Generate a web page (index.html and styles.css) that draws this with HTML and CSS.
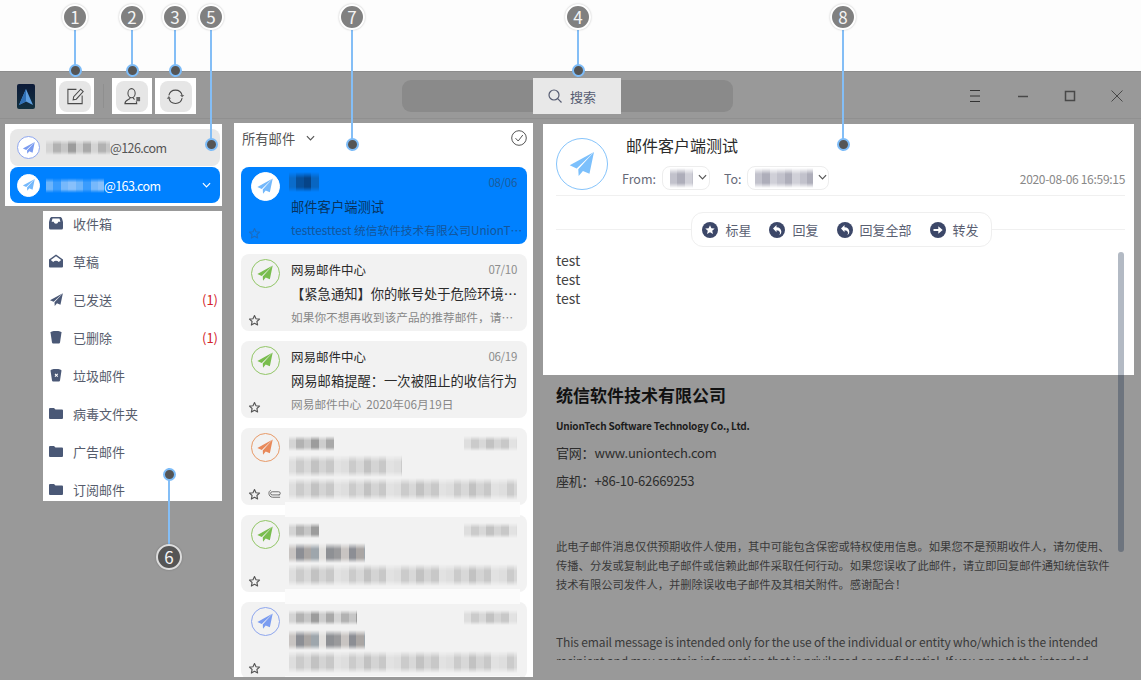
FILE: index.html
```html
<!DOCTYPE html>
<html lang="zh-CN">
<head>
    <meta charset="UTF-8">
    <meta name="viewport" content="width=device-width, initial-scale=1.0">
    <title>邮箱</title>
    <link rel="stylesheet" href="styles.css">
</head>
<body>
    <svg class="defs" xmlns="http://www.w3.org/2000/svg">
        <symbol id="plane" viewBox="0 0 24 24"><path d="M21 3 2.8 13 8 15.3Z"/><path d="M21 3 9.2 16 9.5 21 12.7 17.2 17.6 19.3Z"/></symbol>
        <symbol id="chevron" viewBox="0 0 10 6"><path d="M1 1l4 4 4-4" fill="none" stroke="currentColor" stroke-width="1.3"/></symbol>
        <symbol id="star" viewBox="0 0 14 14"><path d="M7 1.6l1.6 3.5 3.8.4-2.8 2.6.8 3.8L7 10l-3.400 1.900.8-3.800L1.600 5.500l3.800-.4z" fill="none" stroke="currentColor" stroke-width="1.200" stroke-linejoin="round"/></symbol>
        <symbol id="folder" viewBox="0 0 14 14"><path d="M0 3a1 1 0 0 1 1-1h4l1.500 1.600H13a1 1 0 0 1 1 1V12a1 1 0 0 1-1 1H1a1 1 0 0 1-1-1z"/></symbol>
        <symbol id="cup" viewBox="0 0 14 14"><path d="M1.500 2.500C1.500 1.600 3.500 1 7 1s5.500.6 5.500 1.500L11 12.500c-.1.600-.5 1-1.100 1H4.100c-.6 0-1-.4-1.100-1z"/></symbol>
    </svg>

    <div class="top-gap"></div>

    <div class="window">
        <header class="toolbar">
            <div class="logo"><svg viewBox="0 0 18 25"><path d="M9 5 2 21 9 17.500 16 21Z" fill="#5f9fe0"/><path d="M9 5v12.500L2 21Z" fill="#2f6fb5"/></svg></div>
            <div class="tool-box tool-first">
                <button class="tool-btn"><svg viewBox="0 0 20 20" class="tool-icon"><path d="M11 2.500H2v15h15V9"/><path d="M7.500 13.500l.6-3.300L15.500 2.300l2.600 2.500L10.800 12.800z"/></svg></button>
            </div>
            <span class="tool-divider"></span>
            <div class="tool-box">
                <button class="tool-btn"><svg viewBox="0 0 20 20" class="tool-icon"><ellipse cx="9" cy="6.500" rx="3.800" ry="4.800"/><path d="M7.200 11v1.200C5.500 13.500 2 14 2 17.500h12.500c0-1-.3-1.700-.8-2.300"/><path d="M11 11v1.200l1.500.8"/><path class="tool-solid" d="M14 10.500h4v4.500h-4z"/></svg></button>
            </div>
            <div class="tool-box tool-last">
                <button class="tool-btn"><svg viewBox="0 0 20 20" class="tool-icon"><path d="M3 8.800a7.200 7.200 0 0 1 14 0"/><path d="M17 11.800a7.200 7.200 0 0 1-14 0"/><path class="tool-solid" d="M14.800 8.300h4.400L17 11z"/><path class="tool-solid" d="M.8 12.300h4.400L3 9.600z"/></svg></button>
            </div>
            <div class="search">
                <div class="search-box">
                    <svg viewBox="0 0 16 16" class="search-icon"><circle cx="7" cy="7" r="5"/><path d="M10.700 10.700 14.500 14.500"/></svg>
                    <span>搜索</span>
                </div>
            </div>
            <div class="win-controls">
                <span class="win-btn"><svg viewBox="0 0 12 12" class="win-dark"><path d="M1 .5h10M1 6h10M1 11.500h10"/></svg></span>
                <span class="win-btn"><svg viewBox="0 0 12 12"><path d="M1 6.500h10" class="win-thick"/></svg></span>
                <span class="win-btn"><svg viewBox="0 0 12 12"><path d="M1.500 1.500h9v9h-9z" class="win-thick"/></svg></span>
                <span class="win-btn"><svg viewBox="0 0 12 12"><path d="M.5.500l11 11M11.500.500l-11 11"/></svg></span>
            </div>
        </header>

        <main class="main">
            <aside class="left">
                <div class="accounts">
                    <div class="account">
                        <span class="avatar avatar-small avatar-periwinkle"><svg class="plane"><use href="#plane"/></svg></span>
                        <span class="smudge smudge-grey account-smudge-a"></span><span class="account-domain">@126.com</span>
                    </div>
                    <div class="account account-active">
                        <span class="avatar avatar-small avatar-sky"><svg class="plane"><use href="#plane"/></svg></span>
                        <span class="smudge smudge-sky account-smudge-b"></span><span class="account-domain">@163.com</span>
                        <svg class="account-chevron"><use href="#chevron"/></svg>
                    </div>
                </div>
                <nav class="menu">
                    <ul class="menu-list">
                        <li class="menu-item">
                            <svg class="menu-icon" viewBox="0 0 14 14"><path fill-rule="evenodd" d="M3 1h8c1 0 1.500.5 2 1.500L14 6v6a1.500 1.500 0 0 1-1.500 1.500h-11A1.500 1.500 0 0 1 0 12V6l1-3.500C1.500 1.500 2 1 3 1zm-.4 4.800L3.500 2.500h7l.9 3.300H9.300c-.3 1.200-1.200 2-2.300 2s-2-.8-2.300-2z"/></svg>
                            <span>收件箱</span>
                        </li>
                        <li class="menu-item">
                            <svg class="menu-icon" viewBox="0 0 14 14"><path fill-rule="evenodd" d="M7 .5 14 5.500V12.500a1 1 0 0 1-1 1H1a1 1 0 0 1-1-1V5.500zM7 2.300 1.800 6l2.400 1.900c.8-.7 1.800-1.100 2.800-1.100s2 .4 2.800 1.100L12.200 6z"/></svg>
                            <span>草稿</span>
                        </li>
                        <li class="menu-item">
                            <svg class="menu-icon menu-icon-plane"><use href="#plane"/></svg>
                            <span>已发送</span><span class="menu-count">(1)</span>
                        </li>
                        <li class="menu-item">
                            <svg class="menu-icon"><use href="#cup"/></svg>
                            <span>已删除</span><span class="menu-count">(1)</span>
                        </li>
                        <li class="menu-item">
                            <svg class="menu-icon" viewBox="0 0 14 14"><path fill-rule="evenodd" d="M1.500 2.500C1.500 1.600 3.500 1 7 1s5.500.6 5.500 1.500L11 12.500c-.1.600-.5 1-1.100 1H4.100c-.6 0-1-.4-1.100-1zM5.600 6.300l1 1-1 1 .8.800 1-1 1 1 .7-.8-1-1 1-1-.7-.7-1 1-1-1z"/></svg>
                            <span>垃圾邮件</span>
                        </li>
                        <li class="menu-item">
                            <svg class="menu-icon"><use href="#folder"/></svg>
                            <span>病毒文件夹</span>
                        </li>
                        <li class="menu-item">
                            <svg class="menu-icon"><use href="#folder"/></svg>
                            <span>广告邮件</span>
                        </li>
                        <li class="menu-item">
                            <svg class="menu-icon"><use href="#folder"/></svg>
                            <span>订阅邮件</span>
                        </li>
                    </ul>
                </nav>
            </aside>

            <section class="list">
                <div class="list-head">
                    <span>所有邮件</span>
                    <svg class="list-chevron"><use href="#chevron"/></svg>
                    <svg class="list-check" viewBox="0 0 16 16"><circle cx="8" cy="8" r="7.300"/><path d="M4.500 8.200 7.200 11 11.800 5"/></svg>
                </div>
                <div class="cards">
                    <article class="card card-active">
                        <div class="card-side">
                            <span class="avatar avatar-sky"><svg class="plane"><use href="#plane"/></svg></span>
                            <svg class="card-star"><use href="#star"/></svg>
                        </div>
                        <div class="card-body">
                            <div class="card-top"><span class="smudge smudge-navy smudge-name-s"></span><span class="card-date">08/06</span></div>
                            <div class="card-subject">邮件客户端测试</div>
                            <div class="card-preview">testtesttest 统信软件技术有限公司UnionT…</div>
                        </div>
                    </article>
                    <article class="card">
                        <div class="card-side">
                            <span class="avatar avatar-green"><svg class="plane"><use href="#plane"/></svg></span>
                            <svg class="card-star"><use href="#star"/></svg>
                        </div>
                        <div class="card-body">
                            <div class="card-top"><span class="card-name">网易邮件中心</span><span class="card-date">07/10</span></div>
                            <div class="card-subject">【紧急通知】你的帐号处于危险环境…</div>
                            <div class="card-preview">如果你不想再收到该产品的推荐邮件，请…</div>
                        </div>
                    </article>
                    <article class="card">
                        <div class="card-side">
                            <span class="avatar avatar-green"><svg class="plane"><use href="#plane"/></svg></span>
                            <svg class="card-star"><use href="#star"/></svg>
                        </div>
                        <div class="card-body">
                            <div class="card-top"><span class="card-name">网易邮件中心</span><span class="card-date">06/19</span></div>
                            <div class="card-subject">网易邮箱提醒：一次被阻止的收信行为</div>
                            <div class="card-preview">网易邮件中心&nbsp; 2020年06月19日</div>
                        </div>
                    </article>
                    <article class="card card-pale">
                        <div class="card-side">
                            <span class="avatar avatar-orange"><svg class="plane"><use href="#plane"/></svg></span>
                            <svg class="card-star"><use href="#star"/></svg>
                            <svg class="card-clip" viewBox="0 0 14 10"><path d="M12.500 6H4.500a1.700 1.700 0 0 1 0-3.400h7a1.700 1.700 0 0 1 0 3.400"/><path d="M3 1C1.500 1.500 1 2.800 1 4.200 1 6.500 2.500 8.500 5 8.500h8"/></svg>
                        </div>
                        <div class="card-body">
                            <div class="card-top"><span class="smudge smudge-grey smudge-name-m"></span><span class="smudge smudge-pale smudge-date"></span></div>
                            <div class="smudge smudge-pale smudge-subject-l"></div>
                            <div class="smudge smudge-pale smudge-preview"></div>
                        </div>
                    </article>
                    <article class="card card-pale">
                        <div class="card-side">
                            <span class="avatar avatar-green"><svg class="plane"><use href="#plane"/></svg></span>
                            <svg class="card-star"><use href="#star"/></svg>
                        </div>
                        <div class="card-body">
                            <div class="card-top"><span class="smudge smudge-grey smudge-name-s"></span><span class="smudge smudge-pale smudge-date"></span></div>
                            <div class="smudge smudge-dark smudge-subject-m"></div>
                            <div class="smudge smudge-pale smudge-preview"></div>
                        </div>
                    </article>
                    <article class="card card-pale">
                        <div class="card-side">
                            <span class="avatar avatar-periwinkle"><svg class="plane"><use href="#plane"/></svg></span>
                            <svg class="card-star"><use href="#star"/></svg>
                        </div>
                        <div class="card-body">
                            <div class="card-top"><span class="smudge smudge-grey smudge-name-l"></span><span class="smudge smudge-pale smudge-date"></span></div>
                            <div class="smudge smudge-dark smudge-subject-m"></div>
                            <div class="smudge smudge-pale smudge-preview"></div>
                        </div>
                    </article>
                </div>
            </section>

            <section class="reader">
                <div class="reader-top">
                    <div class="mail-head">
                        <span class="avatar avatar-large"><svg class="plane"><use href="#plane"/></svg></span>
                        <div class="mail-info">
                            <h2 class="mail-title">邮件客户端测试</h2>
                            <div class="mail-meta">
                                <span class="meta-label">From:</span>
                                <span class="addr addr-from"><span class="smudge smudge-mauve smudge-from"></span><svg class="addr-chevron"><use href="#chevron"/></svg></span>
                                <span class="meta-label meta-to">To:</span>
                                <span class="addr addr-to"><span class="smudge smudge-mauve smudge-to"></span><svg class="addr-chevron"><use href="#chevron"/></svg></span>
                                <span class="mail-date">2020-08-06 16:59:15</span>
                            </div>
                        </div>
                    </div>
                    <div class="actions-row">
                        <div class="actions">
                            <span class="action">
                                <svg class="action-icon" viewBox="0 0 16 16"><circle cx="8" cy="8" r="8"/><path class="action-glyph" d="M8 3.200l1.400 3 3.300.3-2.500 2.200.8 3.200L8 10.200l-3 1.700.8-3.200-2.500-2.200 3.300-.3z"/></svg>标星
                            </span>
                            <span class="action">
                                <svg class="action-icon" viewBox="0 0 16 16"><circle cx="8" cy="8" r="8"/><path class="action-glyph" d="M4 6.500 7.500 3v2.200c3 0 4.800 2 4.800 4.300 0 1.600-.7 2.900-2 3.700.7-1 .9-2 .6-2.900-.4-1.300-1.700-2-3.400-2V10.200z"/></svg>回复
                            </span>
                            <span class="action">
                                <svg class="action-icon" viewBox="0 0 16 16"><circle cx="8" cy="8" r="8"/><path class="action-glyph" d="M4 6.500 7.500 3v2.200c3 0 4.800 2 4.800 4.300 0 1.600-.7 2.900-2 3.700.7-1 .9-2 .6-2.900-.4-1.300-1.700-2-3.400-2V10.200z"/></svg>回复全部
                            </span>
                            <span class="action">
                                <svg class="action-icon" viewBox="0 0 16 16"><circle cx="8" cy="8" r="8"/><path class="action-glyph" d="M3.500 7h4.800V4.200L12.700 8l-4.400 3.800V9H3.500z"/></svg>转发
                            </span>
                        </div>
                    </div>
                    <div class="mail-text">
                        <div>test</div>
                        <div>test</div>
                        <div>test</div>
                    </div>
                </div>
                <div class="reader-rest">
                    <div class="sign-name">统信软件技术有限公司</div>
                    <div class="sign-en">UnionTech Software Technology Co., Ltd.</div>
                    <div class="sign-line sign-web">官网：www.uniontech.com</div>
                    <div class="sign-line">座机：+86-10-62669253</div>
                    <p class="notice notice-zh">此电子邮件消息仅供预期收件人使用，其中可能包含保密或特权使用信息。如果您不是预期收件人，请勿使用、<br>传播、分发或复制此电子邮件或信赖此邮件采取任何行动。如果您误收了此邮件，请立即回复邮件通知统信软件<br>技术有限公司发件人，并删除误收电子邮件及其相关附件。感谢配合！</p>
                    <p class="notice notice-en">This email message is intended only for the use of the individual or entity who/which is the intended<br>recipient and may contain information that is privileged or confidential. If you are not the intended</p>
                </div>
                <div class="reader-scroll"></div>
            </section>
        </main>
    </div>

    <div class="pin pin-1"><span class="pin-num">1</span><i class="pin-dot"></i></div>
    <div class="pin pin-2"><span class="pin-num">2</span><i class="pin-dot"></i></div>
    <div class="pin pin-3"><span class="pin-num">3</span><i class="pin-dot"></i></div>
    <div class="pin pin-4"><span class="pin-num">4</span><i class="pin-dot"></i></div>
    <div class="pin pin-5"><span class="pin-num">5</span><i class="pin-dot"></i></div>
    <div class="pin pin-6"><i class="pin-dot"></i><span class="pin-num">6</span></div>
    <div class="pin pin-7"><span class="pin-num">7</span><i class="pin-dot"></i></div>
    <div class="pin pin-8"><span class="pin-num">8</span><i class="pin-dot"></i></div>
</body>
</html>
```

FILE: styles.css
```css
* {
    box-sizing: border-box;
}
body {
    font-family: "Noto Sans CJK SC", "Noto Sans", sans-serif;
    margin: 0;
    width: 1141px;
    height: 682px;
    overflow: hidden;
    position: relative;
    background-color: #fff;
    color: #333;
}
.defs {
    display: none;
}
.top-gap {
    height: 71px;
    background-color: #fdfdfd;
}
.window {
    height: 609px;
    background-color: #999;
    border-top: 1px solid #8c8c8c;
}

/* toolbar */
.toolbar {
    display: flex;
    align-items: center;
    height: 47px;
    padding: 2px 0 0 17px;
    border-bottom: 1px solid #909090;
}
.logo {
    width: 18px;
    height: 25px;
    border-radius: 2px;
    background: linear-gradient(#0c1a38, #12303f);
}
.logo svg {
    display: block;
    width: 18px;
    height: 25px;
}
.tool-box {
    display: flex;
    align-items: center;
    justify-content: center;
    width: 40px;
    height: 36px;
    margin-right: 3px;
    background-color: #fff;
}
.tool-first {
    width: 38px;
    margin: 0 0 0 21px;
}
.tool-last {
    width: 41px;
    margin-right: 0;
}
.tool-divider {
    width: 1px;
    height: 24px;
    margin: 0 8px 0 9px;
    background-color: #8f8f8f;
}
.tool-btn {
    display: flex;
    align-items: center;
    justify-content: center;
    width: 32px;
    height: 31px;
    padding: 0;
    border: none;
    border-radius: 8px;
    background-color: #e6e6e6;
}
.tool-icon {
    width: 19px;
    height: 19px;
    fill: none;
    stroke: #4a4a4a;
    stroke-width: 1.100;
}
.tool-icon .tool-solid {
    fill: #666;
    stroke: none;
}
.search {
    display: flex;
    width: 331px;
    height: 32px;
    margin-left: 206px;
    padding-left: 131px;
    border-radius: 9px;
    background-color: #8a8a8a;
}
.search-box {
    display: flex;
    align-items: center;
    width: 88px;
    height: 36px;
    margin-top: -2px;
    padding-left: 14px;
    font-size: 13px;
    color: #565c72;
    background-color: #e8e8e8;
}
.search-icon {
    width: 16px;
    height: 16px;
    margin-right: 7px;
    fill: none;
    stroke: #565c72;
    stroke-width: 1.200;
}
.win-controls {
    display: flex;
    margin-left: auto;
}
.win-btn {
    display: flex;
    align-items: center;
    justify-content: center;
    width: 47.300px;
}
.win-btn svg {
    width: 12px;
    height: 12px;
    fill: none;
    stroke: #484848;
    stroke-width: 1;
}
.win-btn .win-dark {
    stroke: #333;
}
.win-btn .win-thick {
    stroke-width: 1.500;
}

/* three panes */
.main {
    display: flex;
    align-items: flex-start;
    padding-left: 5px;
}
.left {
    width: 217px;
    padding-top: 5px;
}
.accounts {
    padding: 5px 2px 3px 5px;
    background-color: #fff;
}
.account {
    display: flex;
    align-items: center;
    height: 37px;
    padding-left: 7px;
    border-radius: 8px;
    font-size: 14px;
    color: #555;
    background-color: #e8e8e8;
}
.account-domain {
    font-size: 12.500px;
    letter-spacing: -0.600px;
}
.account-active {
    position: relative;
    height: 36px;
    margin-top: 1px;
    color: #fff;
    background-color: #0081ff;
}
.account-chevron {
    width: 9px;
    height: 6px;
    margin-left: auto;
    margin-right: 9px;
    color: #fff;
}
.avatar {
    display: flex;
    align-items: center;
    justify-content: center;
    flex-shrink: 0;
    width: 29px;
    height: 29px;
    border: 1px solid;
    border-radius: 50%;
}
.avatar-small {
    width: 23px;
    height: 23px;
    margin-right: 6px;
    background-color: #fff;
}
.plane {
    width: 75%;
    height: 75%;
}
.avatar-sky {
    border-color: #fff;
    background-color: #fff;
    fill: #74b8fb;
}
.avatar-periwinkle {
    border-color: #8ea6ee;
    fill: #7b9cf0;
}
.avatar-green {
    border-color: #92c667;
    fill: #79bd4e;
}
.avatar-orange {
    border-color: #e89a68;
    fill: #e8895a;
}
.avatar-large {
    width: 52px;
    height: 52px;
    border: 1.500px solid #86c4fb;
    fill: #7cc0fc;
}
.avatar-large .plane {
    width: 64%;
    height: 64%;
}

.smudge {
    display: block;
    flex-shrink: 0;
    height: 15px;
    filter: blur(0.600px);
    -webkit-mask-image: linear-gradient(transparent, #000 30%, #000 75%, transparent);
    mask-image: linear-gradient(transparent, #000 30%, #000 75%, transparent);
}
.smudge-grey {
    background: repeating-linear-gradient(90deg, #d4d4d4 0 7.500px, #b2b2b2 7.500px 15px, #c6c6c6 15px 22.500px, #9c9c9c 22.500px 30px, #cdcdcd 30px 37.500px, #a9a9a9 37.500px 45px);
}
.smudge-dark {
    background: repeating-linear-gradient(90deg, #c8c4c2 0 7.500px, #8c8e94 7.500px 15px, #aaa6a4 15px 22.500px, #9ea6ac 22.500px 30px, #e2e0de 30px 37.500px, #8e9094 37.500px 45px, #9a9a9c 45px 52.500px);
}
.smudge-pale {
    background: repeating-linear-gradient(90deg, #dedede 0 7.500px, #cbcbcb 7.500px 15px, #d8d8d8 15px 22.500px, #c2c2c2 22.500px 30px, #d4d4d4 30px 37.500px, #c8c8c8 37.500px 45px, #e2e2e2 45px 52.500px);
}
.smudge-sky {
    background: repeating-linear-gradient(90deg, #6cb4fb 0 7.500px, #3a9cfd 7.500px 15px, #76b8fb 15px 22.500px, #88c0fb 22.500px 30px);
}
.smudge-navy {
    background: repeating-linear-gradient(90deg, #0a6ccc 0 7.500px, #07509c 7.500px 15px, #064488 15px 22.500px, #0866c2 22.500px 30px);
}
.smudge-mauve {
    background: repeating-linear-gradient(90deg, #c2c2cc 0 7.500px, #aeaeba 7.500px 15px, #d0d0d8 15px 22.500px);
}
.account-smudge-a {
    width: 64px;
}
.account-smudge-b {
    width: 58px;
}

/* folders */
.menu {
    width: 179px;
    height: 290px;
    margin: 5px 0 0 38px;
    overflow: hidden;
    background-color: #fff;
}
.menu-list {
    margin: -7px 0 0;
    padding: 0;
    list-style: none;
}
.menu-item {
    display: flex;
    align-items: center;
    height: 38px;
    padding: 0 4px 0 6px;
    font-size: 13px;
    color: #565c6c;
}
.menu-icon {
    width: 14px;
    height: 14px;
    margin-right: 10px;
    fill: #4a5876;
}
.menu-icon-plane {
    width: 17px;
    height: 17px;
    margin: 0 8.500px 0 -1.500px;
}
.menu-count {
    margin-left: auto;
    color: #d3222a;
}

/* mail list */
.list {
    width: 299px;
    height: 554px;
    margin: 4px 10px 0 12px;
    overflow: hidden;
    background-color: #fff;
}
.list-head {
    display: flex;
    align-items: center;
    height: 44px;
    padding: 0 6px 14px 8px;
    font-size: 13.300px;
    color: #555;
}
.list-chevron {
    width: 9px;
    height: 6px;
    margin-left: 11px;
}
.list-check {
    width: 16px;
    height: 16px;
    margin-left: auto;
    fill: none;
    stroke: #555;
    stroke-width: 1;
}
.cards {
    display: flex;
    flex-direction: column;
    gap: 10px;
    padding: 0 6px 0 7px;
}
.card {
    position: relative;
    display: flex;
    flex-shrink: 0;
    height: 77px;
    padding: 5px 10px 0 10px;
    border-radius: 8px;
    background-color: #f2f2f2;
}
.card-pale::after {
    content: "";
    position: absolute;
    z-index: 1;
    left: 44px;
    right: 7px;
    bottom: -12px;
    height: 15px;
    background-color: #fbfbfb;
}
.card-pale .card-body {
    margin-left: -2px;
}
.card-active {
    background-color: #0081ff;
}
.card-side {
    position: relative;
    width: 40px;
    flex-shrink: 0;
}
.card-star {
    position: absolute;
    left: -3.500px;
    top: 54.500px;
    width: 13px;
    height: 13px;
    color: #555;
}
.card-active .card-star {
    color: #1a6cc0;
}
.card-clip {
    position: absolute;
    left: 17px;
    top: 56px;
    width: 13px;
    height: 10px;
    fill: none;
    stroke: #666;
    stroke-width: 1;
}
.card-body {
    flex: 1;
    min-width: 0;
    margin-top: -1px;
}
.card-active .smudge {
    margin-left: -2px;
    height: 20px;
}
.card-top {
    display: flex;
    align-items: center;
    justify-content: space-between;
    height: 22px;
}
.card-name {
    font-size: 12.500px;
    color: #2b2b2b;
}
.card-date {
    font-size: 11.500px;
    letter-spacing: -0.300px;
    color: #8d8d8d;
}
.card-subject {
    height: 25px;
    margin-top: 1px;
    font-size: 13.300px;
    line-height: 25px;
    color: #2b2b2b;
    white-space: nowrap;
}
.card-preview {
    margin-top: 1px;
    font-size: 11.700px;
    line-height: 20px;
    color: #888;
    white-space: nowrap;
}
.card-active .card-date {
    color: #1c5c9e;
}
.card-active .card-subject {
    color: #08335e;
}
.card-active .card-preview {
    color: #14559a;
}
.smudge-name-s {
    width: 30px;
}
.smudge-name-m {
    width: 45px;
}
.smudge-name-l {
    width: 68px;
}
.smudge-date {
    width: 53px;
}
.smudge-subject-l {
    width: 113px;
    height: 22px;
    margin-top: 1px;
}
.smudge-subject-m {
    width: 76px;
    height: 20px;
    margin-top: 2px;
}
.smudge-preview {
    height: 22px;
    margin-top: 1px;
}

/* reader */
.reader {
    position: relative;
    width: 591px;
    height: 537px;
    margin-top: 5px;
}
.reader-top {
    height: 251px;
    padding: 14px 9px 0 13px;
    background-color: #fff;
}
.mail-head {
    display: flex;
    height: 58px;
    border-bottom: 1px solid #f0f0f0;
}
.mail-info {
    flex: 1;
    margin-left: 14px;
}
.mail-title {
    height: 25px;
    margin: -5px 0 0 4px;
    font-size: 16px;
    font-weight: 400;
    line-height: 25px;
    color: #2b2b2b;
}
.mail-meta {
    display: flex;
    align-items: center;
    height: 24px;
    margin-top: 8px;
    font-size: 12.500px;
    color: #666a78;
}
.meta-label {
    margin-right: 6px;
}
.meta-to {
    margin-left: 14px;
    margin-right: 5px;
}
.addr {
    display: flex;
    align-items: center;
    height: 24px;
    padding-left: 7px;
    border: 1px solid #ededed;
    border-radius: 8px;
}
.addr-from {
    width: 48px;
}
.addr-to {
    width: 82px;
}
.smudge-from {
    width: 23px;
    height: 20px;
}
.smudge-to {
    width: 58px;
    height: 20px;
}
.addr-chevron {
    width: 9px;
    height: 6px;
    margin: 0 0 3px 5px;
    color: #555;
}
.mail-date {
    margin-left: auto;
    font-size: 12px;
    letter-spacing: -0.300px;
    color: #888;
}
.actions-row {
    position: relative;
    display: flex;
    justify-content: center;
    margin-top: 16px;
}
.actions-row::before {
    content: "";
    position: absolute;
    left: 0;
    right: 0;
    top: 17px;
    border-top: 1px solid #f0f0f0;
}
.actions {
    position: relative;
    display: flex;
    gap: 18px;
    height: 35px;
    margin-left: 2px;
    padding: 0 12px 0 10px;
    align-items: center;
    border: 1px solid #efefef;
    border-radius: 12px;
    font-size: 13px;
    color: #5a6072;
    background-color: #fff;
}
.action {
    display: flex;
    align-items: center;
    gap: 7px;
}
.action-icon {
    width: 16px;
    height: 16px;
    fill: #3c4768;
}
.action-glyph {
    fill: #fff;
}
.mail-text {
    margin-top: 4px;
    font-size: 14px;
    line-height: 19px;
    color: #444;
}
.reader-rest {
    height: 285px;
    overflow: hidden;
    padding: 7px 10px 0 13px;
    color: #3a3a3a;
}
.sign-name {
    font-size: 17px;
    font-weight: 700;
    line-height: 26px;
    color: #111;
}
.sign-en {
    margin-top: 10px;
    font-size: 10px;
    font-weight: 700;
    line-height: 16px;
    letter-spacing: -0.200px;
    color: #1c1c1c;
}
.sign-line {
    font-size: 13px;
    letter-spacing: -0.200px;
    line-height: 20px;
    margin-top: 8px;
    color: #2c2c2c;
}
.sign-web {
    margin-top: 9px;
}
.notice {
    margin: 0;
    font-size: 11.300px;
    line-height: 19px;
    white-space: nowrap;
}
.notice-zh {
    margin-top: 46px;
}
.notice-en {
    margin-top: 38px;
    font-size: 12px;
    letter-spacing: -0.150px;
}
.reader-scroll {
    position: absolute;
    right: 10px;
    top: 128px;
    width: 6px;
    height: 300px;
    border-radius: 3px;
    background-color: rgba(20, 40, 70, 0.32);
}

/* numbered callouts */
.pin {
    position: absolute;
    z-index: 5;
    display: flex;
    flex-direction: column;
    align-items: center;
    justify-content: space-between;
    top: 4px;
    width: 2px;
    height: 73px;
    background-color: #84bef6;
}
.pin-num {
    flex-shrink: 0;
    width: 26px;
    height: 26px;
    border: 2px solid #fff;
    border-radius: 50%;
    font-size: 17px;
    line-height: 22px;
    text-align: center;
    color: #f4f4f4;
    background-color: #808080;
    box-shadow: 0 0 2px rgba(0, 0, 0, 0.25);
}
.pin-dot {
    flex-shrink: 0;
    width: 13px;
    height: 13px;
    border: 2px solid #7dbcf8;
    border-radius: 50%;
    background-color: #555;
}
.pin-1 {
    left: 74px;
}
.pin-2 {
    left: 131px;
}
.pin-3 {
    left: 174px;
}
.pin-4 {
    left: 577px;
}
.pin-5 {
    left: 210px;
    height: 147px;
}
.pin-6 {
    left: 168px;
    top: 468px;
    height: 102px;
}
.pin-6 .pin-num {
    background-color: #555;
    border-color: #ddd;
}
.pin-7 {
    left: 351px;
    height: 147px;
}
.pin-8 {
    left: 842px;
    height: 147px;
}
```
